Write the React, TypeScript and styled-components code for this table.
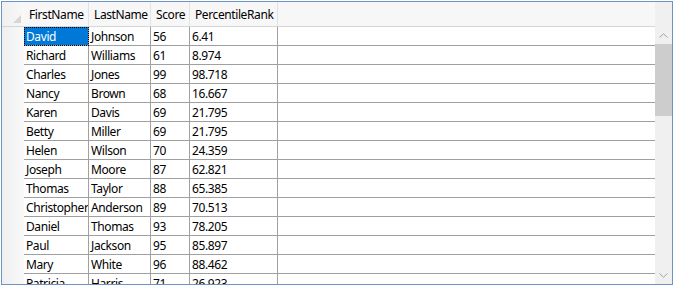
import React from 'react';
import styled, { createGlobalStyle } from 'styled-components';

interface Person {
  first: string;
  last: string;
  score: number;
  rank: string;
}

const people: Person[] = [
  { first: 'David', last: 'Johnson', score: 56, rank: '6.41' },
  { first: 'Richard', last: 'Williams', score: 61, rank: '8.974' },
  { first: 'Charles', last: 'Jones', score: 99, rank: '98.718' },
  { first: 'Nancy', last: 'Brown', score: 68, rank: '16.667' },
  { first: 'Karen', last: 'Davis', score: 69, rank: '21.795' },
  { first: 'Betty', last: 'Miller', score: 69, rank: '21.795' },
  { first: 'Helen', last: 'Wilson', score: 70, rank: '24.359' },
  { first: 'Joseph', last: 'Moore', score: 87, rank: '62.821' },
  { first: 'Thomas', last: 'Taylor', score: 88, rank: '65.385' },
  { first: 'Christopher', last: 'Anderson', score: 89, rank: '70.513' },
  { first: 'Daniel', last: 'Thomas', score: 93, rank: '78.205' },
  { first: 'Paul', last: 'Jackson', score: 95, rank: '85.897' },
  { first: 'Mary', last: 'White', score: 96, rank: '88.462' },
  { first: 'Patricia', last: 'Harris', score: 71, rank: '26.923' }
];

const columns = [
  { title: 'FirstName', width: 65 },
  { title: 'LastName', width: 62 },
  { title: 'Score', width: 39 },
  { title: 'PercentileRank', width: 88 }
];

const App = () => {
  return (
    <>
      <GlobalStyle />
      <Frame>
        <GridArea>
          <HeaderRow>
            <Corner>
              <svg width="8" height="8" viewBox="0 0 8 8">
                <polygon points="8,0 8,8 0,8" fill="#d6d6d6" />
              </svg>
            </Corner>
            {columns.map((c) => (
              <HeaderCell key={c.title} w={c.width}>
                {c.title}
              </HeaderCell>
            ))}
            <HeaderFill />
          </HeaderRow>
          {people.map((p, i) => (
            <Row key={p.first + p.last}>
              <RowHeader />
              <Cell w={columns[0].width} selected={i === 0}>
                {p.first}
              </Cell>
              <Cell w={columns[1].width}>{p.last}</Cell>
              <Cell w={columns[2].width}>{p.score}</Cell>
              <Cell w={columns[3].width}>{p.rank}</Cell>
              <RowFill />
            </Row>
          ))}
        </GridArea>
        <ScrollBar>
          <ScrollTop />
          <ArrowButton>
            <svg width="9" height="5" viewBox="0 0 9 5">
              <polyline points="0.5,4.5 4.5,0.8 8.5,4.5" fill="none" stroke="#a3a3a3" strokeWidth="1" />
            </svg>
          </ArrowButton>
          <Thumb />
          <Track />
          <ArrowButton>
            <svg width="9" height="5" viewBox="0 0 9 5">
              <polyline points="0.5,0.5 4.5,4.2 8.5,0.5" fill="none" stroke="#a3a3a3" strokeWidth="1" />
            </svg>
          </ArrowButton>
        </ScrollBar>
      </Frame>
    </>
  );
};

export default App;

const GlobalStyle = createGlobalStyle`
  body {
    margin: 0;
    background: #ffffff;
    font-family: "Segoe UI", "Noto Sans", sans-serif;
  }
`;

const Frame = styled.div`
  display: flex;
  box-sizing: border-box;
  width: 672px;
  height: 284px;
  margin: 1px 0 0 1px;
  border: 1px solid #6d93c4;
  background: #ffffff;
  overflow: hidden;
`;

const GridArea = styled.div`
  flex: 1;
  display: flex;
  flex-direction: column;
  overflow: hidden;
`;

const HeaderRow = styled.div`
  display: flex;
  flex-shrink: 0;
  height: 25px;
  box-sizing: border-box;
  background: #f7f7f7;
  border-bottom: 1px solid #d5d5d5;
`;

const Corner = styled.div`
  width: 22px;
  display: flex;
  align-items: flex-end;
  justify-content: flex-end;
  padding: 0 3px 3px 0;
  box-sizing: border-box;
  background: linear-gradient(to right, #f0f0f0, #f8f8f8);
`;

const HeaderCell = styled.div<{ w: number }>`
  width: ${(p) => p.w}px;
  box-sizing: border-box;
  border-right: 1px solid #e3e3e3;
  padding: 1px 0 0 5px;
  display: flex;
  align-items: center;
  font-size: 12px;
  letter-spacing: -0.4px;
  color: #000000;
  white-space: nowrap;
  overflow: hidden;
`;

const HeaderFill = styled.div`
  flex: 1;
`;

const Row = styled.div`
  display: flex;
  flex-shrink: 0;
  height: 19px;
`;

const RowHeader = styled.div`
  width: 22px;
  flex-shrink: 0;
  background: linear-gradient(to right, #efefef, #f9f9f9);
`;

const Cell = styled.div<{ w: number; selected?: boolean }>`
  width: ${(p) => p.w}px;
  flex-shrink: 0;
  box-sizing: border-box;
  border-right: 1px solid #a0a0a0;
  border-bottom: 1px solid #a0a0a0;
  padding: 1px 0 0 2px;
  display: flex;
  align-items: center;
  font-size: 12px;
  letter-spacing: -0.4px;
  white-space: nowrap;
  overflow: hidden;
  color: ${(p) => (p.selected ? '#ffffff' : '#000000')};
  background: ${(p) => (p.selected ? '#0078d7' : 'transparent')};
  outline: ${(p) => (p.selected ? '1px dotted #000000' : 'none')};
  outline-offset: -1px;
`;

const RowFill = styled.div`
  flex: 1;
  border-bottom: 1px solid #a0a0a0;
`;

const ScrollBar = styled.div`
  width: 17px;
  flex-shrink: 0;
  display: flex;
  flex-direction: column;
  background: #f0f0f0;
`;

const ScrollTop = styled.div`
  height: 25px;
  flex-shrink: 0;
`;

const ArrowButton = styled.div`
  height: 17px;
  flex-shrink: 0;
  display: flex;
  align-items: center;
  justify-content: center;
`;

const Thumb = styled.div`
  height: 72px;
  flex-shrink: 0;
  background: #cdcdcd;
`;

const Track = styled.div`
  flex: 1;
`;
